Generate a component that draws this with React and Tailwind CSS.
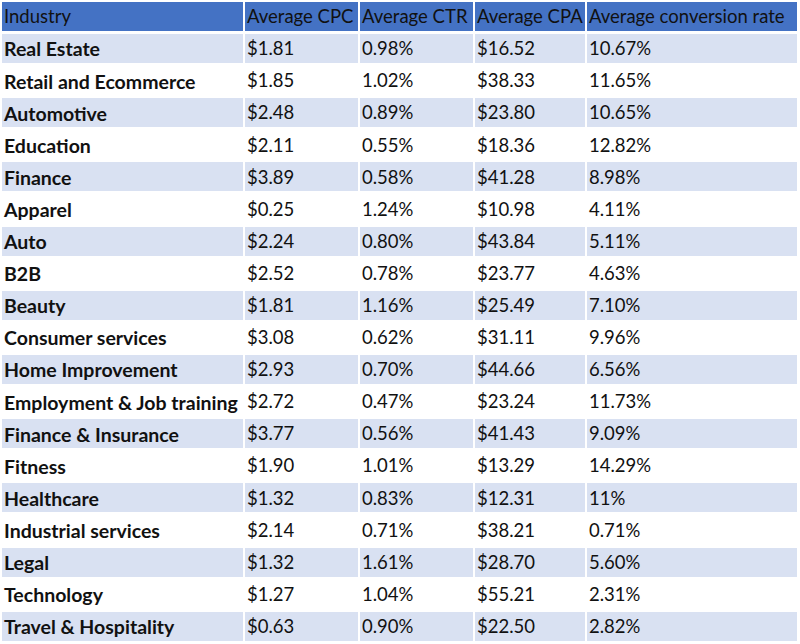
import React from 'react';

const rows = [
  ['Real Estate', '$1.81', '0.98%', '$16.52', '10.67%'],
  ['Retail and Ecommerce', '$1.85', '1.02%', '$38.33', '11.65%'],
  ['Automotive', '$2.48', '0.89%', '$23.80', '10.65%'],
  ['Education', '$2.11', '0.55%', '$18.36', '12.82%'],
  ['Finance', '$3.89', '0.58%', '$41.28', '8.98%'],
  ['Apparel', '$0.25', '1.24%', '$10.98', '4.11%'],
  ['Auto', '$2.24', '0.80%', '$43.84', '5.11%'],
  ['B2B', '$2.52', '0.78%', '$23.77', '4.63%'],
  ['Beauty', '$1.81', '1.16%', '$25.49', '7.10%'],
  ['Consumer services', '$3.08', '0.62%', '$31.11', '9.96%'],
  ['Home Improvement', '$2.93', '0.70%', '$44.66', '6.56%'],
  ['Employment & Job training', '$2.72', '0.47%', '$23.24', '11.73%'],
  ['Finance & Insurance', '$3.77', '0.56%', '$41.43', '9.09%'],
  ['Fitness', '$1.90', '1.01%', '$13.29', '14.29%'],
  ['Healthcare', '$1.32', '0.83%', '$12.31', '11%'],
  ['Industrial services', '$2.14', '0.71%', '$38.21', '0.71%'],
  ['Legal', '$1.32', '1.61%', '$28.70', '5.60%'],
  ['Technology', '$1.27', '1.04%', '$55.21', '2.31%'],
  ['Travel & Hospitality', '$0.63', '0.90%', '$22.50', '2.82%'],
];

const headers = ['Industry', 'Average CPC', 'Average CTR', 'Average CPA', 'Average conversion rate'];

export default function App() {
  return (
    <div className="w-[800px] h-[644px] bg-white overflow-hidden font-['Lato',sans-serif] text-[18.5px] text-[#111]">
      <div className="grid grid-cols-[241px_113px_113px_110px_210px] auto-rows-[29px] gap-x-[2px] gap-y-[3.1px] p-[2px]">
        {headers.map((h) => (
          <div key={h} className="bg-[#4472c4] pl-[2px] pt-[1px] flex items-center whitespace-nowrap overflow-hidden">
            {h}
          </div>
        ))}
        {rows.map((r, i) =>
          r.map((cell, j) => (
            <div
              key={i + '-' + j}
              className={
                'pl-[2px] pt-[1px] flex items-center whitespace-nowrap overflow-hidden ' +
                (i % 2 === 0 ? 'bg-[#d9e1f2] ' : 'bg-white ') +
                (j === 0 ? 'font-bold text-[19.5px]' : '')
              }
            >
              {cell}
            </div>
          ))
        )}
      </div>
    </div>
  );
}
